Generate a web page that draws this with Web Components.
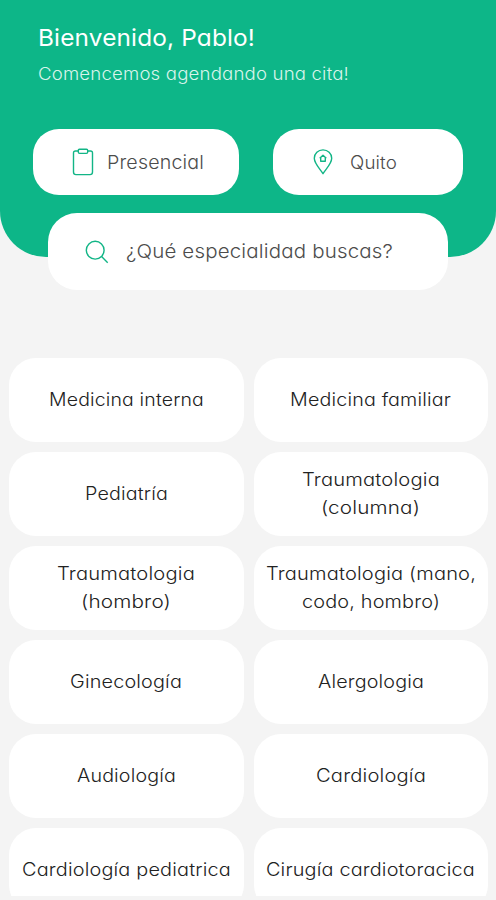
<!DOCTYPE html>
<html lang="es">
<head>
<meta charset="utf-8">
<title>Agendar cita</title>
<style>
  body {
    margin: 0;
    background: #f4f4f4;
    font-family: Inter, "Open Sans", sans-serif;
    font-feature-settings: "cv11";
  }
</style>
</head>
<body>
<booking-screen>
  <welcome-header slot="header">
    <fit-text slot="title" width="217">Bienvenido, Pablo!</fit-text>
    <fit-text slot="subtitle" width="311">Comencemos agendando una cita!</fit-text>
    <filter-pill slot="filters" icon="clipboard" style="--width: 206px; --start: 39px; --gap: 13px">
      <fit-text width="97">Presencial</fit-text>
    </filter-pill>
    <filter-pill slot="filters" icon="pin" style="--width: 190px; --start: 40px; --gap: 17px; --size: 18px">
      <fit-text width="47">Quito</fit-text>
    </filter-pill>
  </welcome-header>
  <search-box slot="search">
    <fit-text width="267">¿Qué especialidad buscas?</fit-text>
  </search-box>
  <specialty-grid></specialty-grid>
</booking-screen>

<script>
// Single line of text, widened to fill a given width
class FitText extends HTMLElement {
  constructor() {
    super();
    this.attachShadow({ mode: 'open' });
    this.shadowRoot.innerHTML = `
      <style>
        :host { display: block; white-space: nowrap; }
        span { display: inline-block; letter-spacing: 0.15px; transform-origin: left; }
      </style>
      <span><slot></slot></span>
    `;
  }

  connectedCallback() {
    const target = Number(this.getAttribute('width'));
    const span = this.shadowRoot.querySelector('span');
    const natural = span.getBoundingClientRect().width;
    span.style.transform = `scaleX(${target / natural})`;
    this.style.width = target + 'px';
  }
}

class LineIcon extends HTMLElement {
  constructor() {
    super();
    this.attachShadow({ mode: 'open' });
  }

  connectedCallback() {
    const icons = {
      clipboard: `<svg width="22" height="28" viewBox="0 0 22 28">
        <path d="M6 3H3.5Q1.5 3 1.5 5V24Q1.5 26.6 4 26.6H18Q20.5 26.6 20.5 24V5Q20.5 3 18.5 3H16"/>
        <path d="M7.5 1.2H14.5Q15.7 1.2 15.7 2.6V4Q15.7 5.4 14.4 5.4H7.6Q6.3 5.4 6.3 4V2.6Q6.3 1.2 7.5 1.2Z"/>
      </svg>`,
      pin: `<svg width="20" height="26" viewBox="0 0 20 26">
        <path d="M10 24.7C7.6 20.6 1.3 14.8 1.3 9.3A8.7 8.4 0 0 1 18.7 9.3C18.7 14.8 12.4 20.6 10 24.7Z"/>
        <path d="M6.7 9.3L10 6.2L13.3 9.3M7.7 8.6V12.3H12.3V8.6"/>
      </svg>`,
      search: `<svg width="24" height="24" viewBox="0 0 24 24">
        <circle cx="10.2" cy="10.2" r="8.9"/>
        <path d="M16.6 16.6L22.7 22.7"/>
      </svg>`
    };
    this.shadowRoot.innerHTML = `
      <style>
        :host { display: block; flex: none; }
        svg { display: block; fill: none; stroke: #12b586; stroke-width: 1.4; stroke-linejoin: round; }
      </style>
      ${icons[this.getAttribute('name')]}
    `;
  }
}

class FilterPill extends HTMLElement {
  constructor() {
    super();
    this.attachShadow({ mode: 'open' });
    this.shadowRoot.innerHTML = `
      <style>
        :host {
          display: flex;
          align-items: center;
          gap: var(--gap);
          box-sizing: border-box;
          width: var(--width);
          height: 66px;
          padding-left: var(--start);
          border-radius: 26px;
          background: #fff;
          color: #4c4c4c;
          font-size: var(--size, 18.5px);
          font-weight: 300;
        }
      </style>
      <line-icon name="${this.getAttribute('icon')}"></line-icon>
      <slot></slot>
    `;
  }
}

class SearchBox extends HTMLElement {
  constructor() {
    super();
    this.attachShadow({ mode: 'open' });
    this.shadowRoot.innerHTML = `
      <style>
        :host {
          display: flex;
          align-items: center;
          gap: 17px;
          box-sizing: border-box;
          height: 77px;
          margin: -44px 48px 0;
          padding-left: 37px;
          border-radius: 29px;
          background: #fff;
          color: #4c4c4c;
          font-size: 19px;
          font-weight: 300;
        }
      </style>
      <line-icon name="search"></line-icon>
      <slot></slot>
    `;
  }
}

class WelcomeHeader extends HTMLElement {
  constructor() {
    super();
    this.attachShadow({ mode: 'open' });
    this.shadowRoot.innerHTML = `
      <style>
        :host {
          display: block;
          box-sizing: border-box;
          height: 257px;
          padding: 22px 33px 0;
          border-radius: 0 0 46px 46px;
          background: #0db688;
          color: #fff;
        }
        .title { padding-left: 5px; font-size: 23.5px; line-height: 32px; }
        .subtitle { margin-top: 7px; padding-left: 5px; font-size: 17px; line-height: 26px; font-weight: 300; color: #d8f4eb; }
        .filters { display: flex; justify-content: space-between; margin-top: 42px; }
      </style>
      <div class="title"><slot name="title"></slot></div>
      <div class="subtitle"><slot name="subtitle"></slot></div>
      <div class="filters"><slot name="filters"></slot></div>
    `;
  }
}

class SpecialtyCard extends HTMLElement {
  constructor() {
    super();
    this.attachShadow({ mode: 'open' });
    this.shadowRoot.innerHTML = `
      <style>
        :host {
          display: flex;
          flex-direction: column;
          align-items: center;
          justify-content: center;
          box-sizing: border-box;
          height: 84px;
          padding-bottom: 1px;
          border-radius: 27px;
          background: #fff;
          color: #222;
          font-size: 18px;
          font-weight: 300;
          line-height: 28px;
        }
      </style>
      <slot></slot>
    `;
  }
}

class SpecialtyGrid extends HTMLElement {
  constructor() {
    super();
    this.attachShadow({ mode: 'open' });
  }

  connectedCallback() {
    // each card is a list of [line, width in px]
    const specialties = [
      [['Medicina interna', 155]],
      [['Medicina familiar', 161]],
      [['Pediatría', 83]],
      [['Traumatologia', 138], ['(columna)', 99]],
      [['Traumatologia', 138], ['(hombro)', 90]],
      [['Traumatologia (mano,', 210], ['codo, hombro)', 138]],
      [['Ginecología', 112]],
      [['Alergologia', 106]],
      [['Audiología', 99]],
      [['Cardiología', 110]],
      [['Cardiología pediatrica', 209]],
      [['Cirugía cardiotoracica', 209]]
    ];
    const cards = specialties.map(lines => `<specialty-card>${
      lines.map(([text, width]) => `<fit-text width="${width}">${text}</fit-text>`).join('')
    }</specialty-card>`);
    this.shadowRoot.innerHTML = `
      <style>
        :host {
          display: grid;
          grid-template-columns: 1fr 1fr;
          grid-auto-rows: 84px;
          gap: 10px;
          box-sizing: border-box;
          height: 538px;
          padding: 0 8px 0 9px;
          overflow: hidden;
        }
      </style>
      ${cards.join('')}
    `;
  }
}

class BookingScreen extends HTMLElement {
  constructor() {
    super();
    this.attachShadow({ mode: 'open' });
    this.shadowRoot.innerHTML = `
      <style>
        :host { display: flex; flex-direction: column; box-sizing: border-box; height: 900px; overflow: hidden; }
        .results { margin-top: 68px; }
      </style>
      <slot name="header"></slot>
      <slot name="search"></slot>
      <div class="results"><slot></slot></div>
    `;
  }
}

// containers first, so text is measured with its final font
customElements.define('booking-screen', BookingScreen);
customElements.define('welcome-header', WelcomeHeader);
customElements.define('filter-pill', FilterPill);
customElements.define('search-box', SearchBox);
customElements.define('line-icon', LineIcon);
customElements.define('specialty-card', SpecialtyCard);
customElements.define('specialty-grid', SpecialtyGrid);
customElements.define('fit-text', FitText);
</script>
</body>
</html>
